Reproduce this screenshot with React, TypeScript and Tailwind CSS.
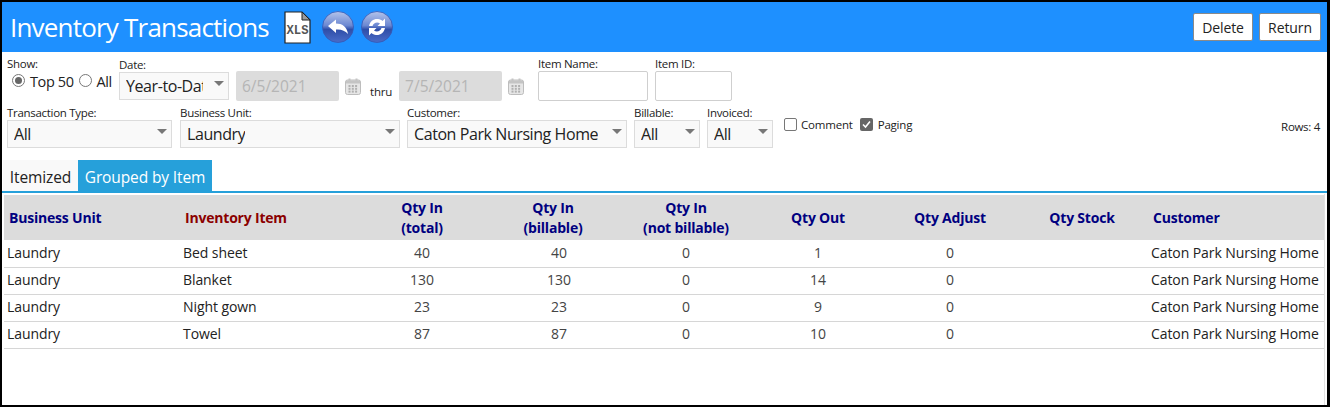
import React from "react";

const font = { fontFamily: '"Open Sans", "Noto Sans", sans-serif' };

function Orb({ id, children }: { id: string; children: React.ReactNode }) {
  return (
    <svg width="32" height="32" viewBox="0 0 32 32" className="shrink-0">
      <defs>
        <linearGradient id={id} x1="0" y1="0" x2="0" y2="1">
          <stop offset="0" stopColor="#b4c4ea" />
          <stop offset="0.45" stopColor="#6c88d2" />
          <stop offset="0.58" stopColor="#2f4ea8" />
          <stop offset="1" stopColor="#4a6cc8" />
        </linearGradient>
      </defs>
      <circle cx="16" cy="16" r="15.5" fill={`url(#${id})`} stroke="#3558b4" strokeWidth="0.8" />
      {children}
    </svg>
  );
}

function Calendar() {
  return (
    <svg width="16" height="17" viewBox="0 0 16 17" className="shrink-0">
      <rect x="0.5" y="2" width="15" height="14.5" rx="2" fill="#e6e6e6" stroke="#bdbdbd" />
      <rect x="1" y="2.5" width="14" height="3" fill="#c4c4c4" />
      <rect x="3.5" y="0.5" width="2" height="3" fill="#c4c4c4" />
      <rect x="10.5" y="0.5" width="2" height="3" fill="#c4c4c4" />
      {[3.5, 6.8, 10.1].map((x) =>
        [7, 9.8, 12.6].map((y) => <rect key={`${x}-${y}`} x={x} y={y} width="2" height="2" fill="#b0b0b0" />)
      )}
    </svg>
  );
}

function Select({ w, value, clip }: { w: string; value: string; clip?: boolean }) {
  return (
    <div className={`${w} h-[28px] flex items-center bg-[#f9f9f9] border border-[#dcdcdc] pl-[6px] pr-[4px] text-[16px] tracking-[-0.42px] text-[#222]`}>
      <span className={`whitespace-nowrap overflow-hidden ${clip ? "max-w-[77px]" : ""}`}>{value}</span>
      <span className="ml-auto mb-[5px] w-0 h-0 border-x-[5px] border-x-transparent border-t-[5px] border-t-[#777]" />
    </div>
  );
}

function Field({ label, className, children }: { label: string; className?: string; children: React.ReactNode }) {
  return (
    <div className={`flex flex-col ${className ?? ""}`}>
      <span className="text-[11.5px] leading-[14px] text-[#222] tracking-[-0.3px] whitespace-nowrap">{label}</span>
      {children}
    </div>
  );
}

const rows = [
  ["Bed sheet", "40", "40", "0", "1", "0"],
  ["Blanket", "130", "130", "0", "14", "0"],
  ["Night gown", "23", "23", "0", "9", "0"],
  ["Towel", "87", "87", "0", "10", "0"],
];

const colWidths = [174, 178, 132, 142, 122, 132, 132, 132, 176];

export default function App() {
  return (
    <div style={font} className="w-[1330px] h-[407px] border-2 border-black border-r-[3px] bg-white overflow-hidden flex flex-col text-[#222]">
      <header className="h-[50px] shrink-0 bg-[#1e90ff] flex items-center pl-[8px] pr-[6px]">
        <h1 className="text-[26px] font-normal text-white tracking-[-0.8px] leading-none">Inventory Transactions</h1>
        <svg width="27" height="33" viewBox="0 0 27 33" className="ml-[15px] shrink-0">
          <path d="M1 1H18L26 9V32H1Z" fill="#fff" stroke="#222" strokeWidth="1.2" />
          <path d="M18 1V9H26Z" fill="#9a9a9a" stroke="#222" strokeWidth="1" />
          <text x="2.5" y="23" fontSize="13" fontWeight="700" fill="#555" fontFamily="Liberation Mono, monospace" textLength="22" lengthAdjust="spacingAndGlyphs">XLS</text>
        </svg>
        <div className="ml-[11px] flex">
          <Orb id="orbA">
            <path d="M6 15 L14 8.5 V12.5 C20 12.5 25 15.5 26 23 C23 19.5 19 18 14 18.5 V22 Z" fill="#fff" />
          </Orb>
        </div>
        <div className="ml-[7px] flex">
          <Orb id="orbB">
            <path d="M8 15 C9 10 13 7.5 17 8 C19 8.2 20.5 9 21.5 10 L24 7.5 V15 H16.5 L19 12.5 C16 10.5 12.5 12 11.5 15 Z" fill="#fff" />
            <path d="M24 17 C23 22 19 24.5 15 24 C13 23.8 11.5 23 10.5 22 L8 24.5 V17 H15.5 L13 19.5 C16 21.5 19.5 20 20.5 17 Z" fill="#fff" />
          </Orb>
        </div>
        <div className="ml-auto flex gap-[6px]">
          <button className="h-[28px] w-[60px] bg-white border border-[#8a8a8a] rounded-[2px] text-[14px] tracking-[-0.1px] text-[#222]">Delete</button>
          <button className="h-[28px] w-[62px] bg-white border border-[#8a8a8a] rounded-[2px] text-[14px] tracking-[-0.1px] text-[#222]">Return</button>
        </div>
      </header>

      <section className="h-[108px] shrink-0 pl-[5px] pt-[5px]">
        <div className="flex h-[49px]">
          <div className="flex flex-col w-[112px]">
            <span className="text-[11.5px] leading-[14px] tracking-[-0.3px]">Show:</span>
            <div className="flex items-center h-[20px] pl-[5px] text-[14.5px] tracking-[-0.4px] mt-[1px]">
              <span className="mt-[-3px] w-[13px] h-[13px] rounded-full border border-[#777] flex items-center justify-center">
                <span className="w-[7px] h-[7px] rounded-full bg-[#666]" />
              </span>
              <span className="ml-[5px]">Top 50</span>
              <span className="mt-[-3px] ml-[5px] w-[13px] h-[13px] rounded-full border border-[#777]" />
              <span className="ml-[5px]">All</span>
            </div>
          </div>
          <Field label="Date:" className="pt-[1px]">
            <Select w="w-[110px]" value="Year-to-Date" clip />
          </Field>
          <div className="ml-[7px] mt-[14px] w-[103px] h-[30px] bg-[#dcdcdc] rounded-[2px] pl-[6px] pt-[2px] flex items-center text-[15.5px] text-[#b5b5b5]">6/5/2021</div>
          <div className="ml-[6px] mt-[21px]"><Calendar /></div>
          <span className="ml-[9px] mt-[28px] text-[11.5px] tracking-[-0.2px] leading-[14px]">thru</span>
          <div className="ml-[7px] mt-[14px] w-[103px] h-[30px] bg-[#dcdcdc] rounded-[2px] pl-[6px] pt-[2px] flex items-center text-[15.5px] text-[#b5b5b5]">7/5/2021</div>
          <div className="ml-[6px] mt-[21px]"><Calendar /></div>
          <Field label="Item Name:" className="ml-[14px]">
            <div className="w-[110px] h-[30px] bg-white border border-[#cfcfcf] rounded-[2px]" />
          </Field>
          <Field label="Item ID:" className="ml-[7px]">
            <div className="w-[77px] h-[30px] bg-white border border-[#cfcfcf] rounded-[2px]" />
          </Field>
        </div>

        <div className="flex">
          <Field label="Transaction Type:">
            <Select w="w-[165px]" value="All" />
          </Field>
          <Field label="Business Unit:" className="ml-[8px]">
            <Select w="w-[220px]" value="Laundry" />
          </Field>
          <Field label="Customer:" className="ml-[7px]">
            <Select w="w-[220px]" value="Caton Park Nursing Home" />
          </Field>
          <Field label="Billable:" className="ml-[7px]">
            <Select w="w-[66px]" value="All" />
          </Field>
          <Field label="Invoiced:" className="ml-[7px]">
            <Select w="w-[66px]" value="All" />
          </Field>
          <div className="ml-[11px] mt-[11px] flex items-center h-[15px] text-[11.5px] tracking-[-0.2px]">
            <span className="w-[13px] h-[13px] border border-[#777] rounded-[2px] bg-white" />
            <span className="ml-[4px]">Comment</span>
            <span className="ml-[7px] w-[13px] h-[13px] rounded-[2px] bg-[#666] flex items-center justify-center">
              <svg width="9" height="9" viewBox="0 0 9 9"><path d="M1 4.5 L3.5 7 L8 1.5" fill="none" stroke="#fff" strokeWidth="1.6" /></svg>
            </span>
            <span className="ml-[5px]">Paging</span>
          </div>
          <span className="ml-auto mr-[7px] mt-[14px] text-[11.5px] tracking-[-0.3px] leading-[14px]">Rows: 4</span>
        </div>
      </section>

      <nav className="h-[33px] shrink-0 flex items-end pl-[1px] text-[15.5px] border-b-2 border-[#26a0da] tracking-[-0.12px]">
        <span className="h-[31px] w-[75px] pt-[5px] flex items-center justify-center bg-[#f9f9f9] text-[#222]">Itemized</span>
        <span className="h-[31px] w-[134px] pt-[5px] flex items-center justify-center bg-[#26a0da] text-white">Grouped by Item</span>
      </nav>

      <div className="flex-1 ml-[1px] mt-[1px] pl-[1px] pt-[1px] w-[1322px] border-r border-[#e2e2e2]">
        <table className="table-fixed border-collapse w-[1320px] text-[14px]">
          <colgroup>
            {colWidths.map((w, i) => (
              <col key={i} width={w} />
            ))}
          </colgroup>
          <thead>
            <tr className="h-[45px] bg-[#dcdcdc] text-[#000080] text-[14px] leading-[20px] tracking-[-0.2px]">
              <th className="text-left pl-[5px] font-bold">Business Unit</th>
              <th className="text-left pl-[7px] font-bold text-[#8b0000]">Inventory Item</th>
              <th className="font-bold">Qty In<br />(total)</th>
              <th className="font-bold pr-[12px]">Qty In<br />(billable)</th>
              <th className="font-bold pr-[10px]">Qty In<br />(not billable)</th>
              <th className="font-bold">Qty Out</th>
              <th className="font-bold">Qty Adjust</th>
              <th className="font-bold">Qty Stock</th>
              <th className="text-left pl-[5px] font-bold">Customer</th>
            </tr>
          </thead>
          <tbody>
            {rows.map((r) => (
              <tr key={r[0]} className="h-[27px] border-b border-[#d6d6d6] tracking-[-0.08px]">
                <td className="pl-[3px] pb-[2px]">Laundry</td>
                <td className="pl-[5px] pb-[2px]">{r[0]}</td>
                <td className="text-center text-[#444] pb-[2px]">{r[1]}</td>
                <td className="text-center text-[#444] pb-[2px]">{r[2]}</td>
                <td className="text-center text-[#444] pr-[10px] pb-[2px]">{r[3]}</td>
                <td className="text-center text-[#444] pb-[2px]">{r[4]}</td>
                <td className="text-center text-[#444] pb-[2px]">{r[5]}</td>
                <td />
                <td className="pl-[3px] pb-[2px] whitespace-nowrap">Caton Park Nursing Home</td>
              </tr>
            ))}
          </tbody>
        </table>
      </div>
    </div>
  );
}
